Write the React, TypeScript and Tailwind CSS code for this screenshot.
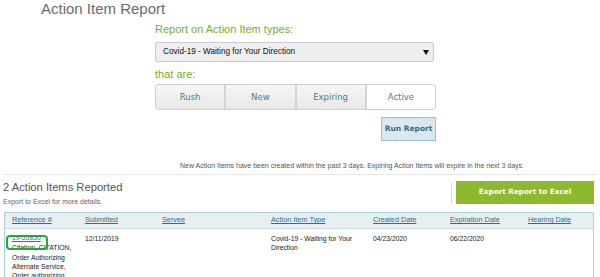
import React from 'react';

const COLUMNS = [
  { label: 'Reference #', w: 'w-[73px]' },
  { label: 'Submitted', w: 'w-[77px]' },
  { label: 'Servee', w: 'w-[109px]' },
  { label: 'Action Item Type', w: 'w-[102px]' },
  { label: 'Created Date', w: 'w-[77px]' },
  { label: 'Expiration Date', w: 'w-[78px]' },
  { label: 'Hearing Date', w: 'w-[72px]' },
];

const FILTERS = ['Rush', 'New', 'Expiring', 'Active'];

const App: React.FC = () => {
  return (
    <div className="w-[600px] h-[277px] overflow-hidden bg-white font-['Liberation_Sans',Arial,sans-serif]">
      <h1 className="pl-[41px] text-[15px] leading-[17px] text-[#6b6b6b]">Action Item Report</h1>

      {/* Report form */}
      <div className="ml-[155px] w-[281px] flex flex-col">
        <div className="mt-[5px] text-[11px] leading-[14px] text-[#7aab2c]">Report on Action Item types:</div>
        <div className="mt-[6px] w-[279px] h-[20px] flex items-center justify-between pl-[7px] pr-[4px] bg-[#efefef] border border-[#cacaca] rounded-[2px]">
          <span className="text-[8.2px] text-[#111]">Covid-19 - Waiting for Your Direction</span>
          <svg width="6" height="5" viewBox="0 0 6 5"><path d="M0 0h6L3 5z" fill="#111" /></svg>
        </div>
        <div className="mt-[5px] text-[11px] leading-[14px] text-[#7aab2c]">that are:</div>
        <div className="mt-[3px] h-[26px] flex border border-[#cfcfcf] rounded-[3px] overflow-hidden font-['DejaVu_Sans',Verdana,sans-serif]">
          {FILTERS.map((f, i) => (
            <div
              key={f}
              className={`flex-1 flex items-center justify-center text-[8.5px] text-[#4a7b94] ${i > 0 ? 'border-l-2 border-[#d4d4d4]' : ''} ${f === 'Active' ? 'bg-white' : 'bg-gradient-to-b from-[#f6f6f6] to-[#e8e8e8]'}`}
            >
              {f}
            </div>
          ))}
        </div>
        <div className="mt-[7px] flex justify-end">
          <button className="w-[55px] h-[24px] bg-[#dbe8ee] border border-[#9fbfcd] text-[7.5px] font-bold text-[#3b6a84] font-['DejaVu_Sans',Verdana,sans-serif]">
            Run Report
          </button>
        </div>
      </div>

      <p className="mt-[20px] pr-[76px] text-right text-[7px] leading-[10px] text-[#555]">
        New Action Items have been created within the past 3 days. Expiring Action Items will expire in the next 3 days.
      </p>
      <div className="mx-[3px] mt-[3px] border-t border-[#e6e6e6]" />

      {/* Results header */}
      <div className="mt-[6px] flex pl-[3px] pr-[6px]">
        <div className="flex-1">
          <h2 className="text-[11.2px] leading-[13px] text-[#555]">2 Action Items Reported</h2>
          <div className="mt-[3px] text-[7px] leading-[9px] text-[#666]">Export to Excel for more details.</div>
        </div>
        <div className="flex items-start gap-[4px]">
          <div className="mt-[1px] w-[1px] h-[23px] bg-[#dcdcdc]" />
          <button className="w-[138px] h-[23px] bg-[#8cb92e] text-white text-[7.3px] font-bold font-['DejaVu_Sans',Verdana,sans-serif]">
            Export Report to Excel
          </button>
        </div>
      </div>

      {/* Results table */}
      <div className="mt-[6px] ml-[4px] w-[590px] border border-[#a9d0dd] text-[6.8px]">
        <div className="flex h-[16px] items-center bg-[#e9eef0] border-b border-[#c4dbe3]">
          {COLUMNS.map((c) => (
            <div key={c.label} className={`${c.w} pl-[7px] text-[7.3px] text-[#2e6d92] underline`}>
              {c.label}
            </div>
          ))}
        </div>
        <div className="flex pt-[5px] leading-[9.3px] text-[#222] pb-[20px]">
          <div className="w-[73px] pl-[7px] relative">
            <div className="-mt-[1px] mb-[1px]">
              <a className="text-[#2f6ea6] underline">19-55850</a>
            </div>
            <div className="w-[62px]">Citation, CITATION, Order Authorizing Alternate Service, Order authorizing</div>
            <div className="absolute left-[1px] top-[1px] w-[42px] h-[15px] border-2 border-[#29a33a] rounded-[4px]" />
          </div>
          <div className="w-[77px] pl-[7px]">12/11/2019</div>
          <div className="w-[109px] pl-[7px]" />
          <div className="w-[102px] pl-[7px]">Covid-19 - Waiting for Your Direction</div>
          <div className="w-[77px] pl-[7px]">04/23/2020</div>
          <div className="w-[78px] pl-[7px]">06/22/2020</div>
          <div className="w-[72px] pl-[7px]" />
        </div>
      </div>
    </div>
  );
};

export default App;
